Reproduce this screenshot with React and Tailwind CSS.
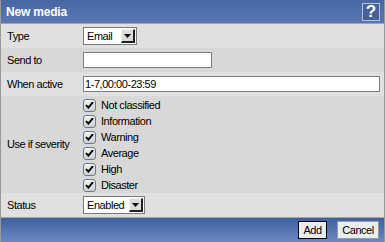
import React from "react";

const txt = "text-[11px] leading-none tracking-[-0.45px] text-black";

function Select({ value, width }) {
  return (
    <div className={`flex h-[18px] items-stretch border border-[#7a7a7a] bg-white ${width}`}>
      <div className={`flex flex-1 items-center pl-[3px] ${txt}`}>{value}</div>
      <div className="my-[1px] mr-[1px] flex w-[14px] items-center justify-center border-t border-l border-t-[#f4f4f4] border-l-[#f4f4f4] border-r-2 border-b-2 border-r-[#202020] border-b-[#202020] bg-[#dcdcdc]">
        <svg width="7" height="4" viewBox="0 0 7 4">
          <polygon points="0,0 7,0 3.5,4" fill="#000" />
        </svg>
      </div>
    </div>
  );
}

function Check({ label }) {
  return (
    <div className="flex h-[16px] items-center">
      <div className="flex h-[13px] w-[13px] items-center justify-center rounded-[3px] border border-[#6b7a96] bg-gradient-to-b from-[#f2f2f2] to-[#d0d0d0]">
        <svg width="9" height="8" viewBox="0 0 9 8">
          <path d="M1 4.2 L3.4 6.6 L8 1.2" stroke="#000" strokeWidth="1.9" fill="none" />
        </svg>
      </div>
      <span className={`ml-[5px] ${txt}`}>{label}</span>
    </div>
  );
}

function Row({ label, light, children }) {
  return (
    <div className={`flex h-[24px] items-center ${light ? "bg-[#e0e0e0]" : "bg-[#d8d8d8]"}`}>
      <div className={`w-[82px] pl-[6px] ${txt}`}>{label}</div>
      <div className="flex flex-1 items-center">{children}</div>
    </div>
  );
}

export default function App() {
  return (
    <div
      className="flex h-[242px] w-[385px] flex-col overflow-hidden border-x border-[#9a9a9a] bg-[#d8d8d8]"
      style={{ fontFamily: '"Liberation Sans", Arial, sans-serif' }}
    >
      <div className="flex h-[23px] items-center justify-between bg-gradient-to-b from-[#4766a3] to-[#5977b2] pl-[5px] pr-[4px]">
        <span className="text-[12px] font-bold leading-none tracking-[-0.2px] text-white">New media</span>
        <div className="flex h-[18px] w-[18px] items-center justify-center border border-[#b4c2de] bg-[#46609a] text-[17px] font-bold leading-none text-white">
          ?
        </div>
      </div>
      <div className="h-px bg-[#a4a4a4]" />
      <Row label="Type" light>
        <Select value="Email" width="w-[54px]" />
      </Row>
      <Row label="Send to">
        <div className="h-[16px] w-[129px] border border-[#7f7f7f] bg-white" />
      </Row>
      <Row label="When active" light>
        <div className={`flex h-[16px] w-[297px] items-center border border-[#7f7f7f] bg-white pl-[1px] ${txt}`}>
          1-7,00:00-23:59
        </div>
      </Row>
      <div className="flex h-[97px] items-center bg-[#d8d8d8]">
        <div className={`w-[82px] pl-[6px] ${txt}`}>Use if severity</div>
        <div className="flex flex-col pt-[1px]">
          <Check label="Not classified" />
          <Check label="Information" />
          <Check label="Warning" />
          <Check label="Average" />
          <Check label="High" />
          <Check label="Disaster" />
        </div>
      </div>
      <Row label="Status" light>
        <Select value="Enabled" width="w-[62px]" />
      </Row>
      <div className="h-px bg-[#a4a4a4]" />
      <div className="flex flex-1 items-center justify-end gap-[10px] bg-gradient-to-b from-[#3f609f] to-[#6c88c0] pr-[5px]">
        <div className={`flex h-[18px] w-[29px] items-center justify-center border border-black bg-[#ececec] ${txt}`}>
          Add
        </div>
        <div className={`flex h-[18px] w-[42px] items-center justify-center border border-[#9c9c9c] bg-[#ececec] ${txt}`}>
          Cancel
        </div>
      </div>
    </div>
  );
}
